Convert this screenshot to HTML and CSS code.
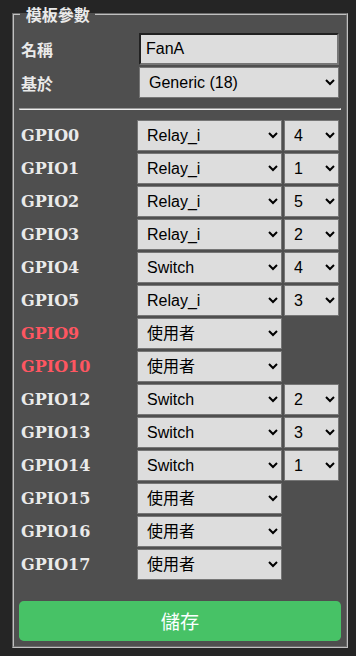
FILE: index.html
```html
<!DOCTYPE html>
<html lang="zh-Hant">
<head>
<meta charset="utf-8">
<title>模板參數</title>
<link rel="stylesheet" href="styles.css">
</head>
<body>
<div class="wrap">
<fieldset class="panel">
<legend class="panel-title"><b>&nbsp;模板參數&nbsp;</b></legend>
<form class="form">
<div class="meta">
<b class="lbl">名稱</b><input class="txt" value="FanA">
<b class="lbl">基於</b><select class="sel"><option>Generic (18)</option></select>
</div>
<hr class="sep">
<div class="gpio">
<b class="gl">GPIO0</b><select class="sel"><option>Relay_i</option></select><select class="sel"><option>4</option></select>
<b class="gl">GPIO1</b><select class="sel"><option>Relay_i</option></select><select class="sel"><option>1</option></select>
<b class="gl">GPIO2</b><select class="sel"><option>Relay_i</option></select><select class="sel"><option>5</option></select>
<b class="gl">GPIO3</b><select class="sel"><option>Relay_i</option></select><select class="sel"><option>2</option></select>
<b class="gl">GPIO4</b><select class="sel"><option>Switch</option></select><select class="sel"><option>4</option></select>
<b class="gl">GPIO5</b><select class="sel"><option>Relay_i</option></select><select class="sel"><option>3</option></select>
<b class="gl warn">GPIO9</b><select class="sel"><option>使用者</option></select>
<b class="gl warn">GPIO10</b><select class="sel"><option>使用者</option></select>
<b class="gl">GPIO12</b><select class="sel"><option>Switch</option></select><select class="sel"><option>2</option></select>
<b class="gl">GPIO13</b><select class="sel"><option>Switch</option></select><select class="sel"><option>3</option></select>
<b class="gl">GPIO14</b><select class="sel"><option>Switch</option></select><select class="sel"><option>1</option></select>
<b class="gl">GPIO15</b><select class="sel"><option>使用者</option></select>
<b class="gl">GPIO16</b><select class="sel"><option>使用者</option></select>
<b class="gl">GPIO17</b><select class="sel"><option>使用者</option></select>
</div>
<button class="save" type="button">儲存</button>
</form>
</fieldset>
</div>
</body>
</html>
```
FILE: styles.css
```css
html, body {
  margin: 0;
  padding: 0;
  background: #252525;
}
body {
  color: #eaeaea;
  font-family: "DejaVu Serif", "Noto Sans CJK TC", serif;
  font-size: 16px;
}
.wrap {
  padding: 2px 8px 0 12px;
}
.panel {
  margin: 0;
  padding: 5px;
  background: #4f4f4f;
  border: 2px groove rgb(192, 192, 192);
}
.panel-title {
  padding: 0 2px;
  margin-left: 1px;
  line-height: 24px;
  font-family: "Noto Sans CJK TC", sans-serif;
  color: #eaeaea;
}
.form {
  margin: 0;
}
.meta {
  display: grid;
  grid-template-columns: 116px 200px;
  gap: 2px;
  padding: 2px;
  align-items: center;
}
.lbl {
  font-family: "Noto Sans CJK TC", sans-serif;
  font-weight: 700;
  line-height: 20px;
}
.txt {
  width: 100%;
  height: 32px;
  box-sizing: border-box;
  margin: 0;
  padding: 5px;
  font: 16px "Liberation Sans", "Noto Sans CJK TC", sans-serif;
  background: #dddddd;
  color: #000;
}
.sel {
  width: 100%;
  height: 31px;
  box-sizing: border-box;
  margin: 0;
  padding: 5px;
  font: 16px "Liberation Sans", "Noto Sans CJK TC", sans-serif;
  background: #dddddd;
  color: #000;
}
.sep {
  margin: 8px 0;
}
.gpio {
  display: grid;
  grid-template-columns: 114px 145px 55px;
  gap: 2px;
  padding: 2px;
  align-items: center;
}
.gl {
  grid-column: 1;
  font-family: "DejaVu Serif", serif;
  font-weight: 700;
  line-height: 20px;
}
.warn {
  color: #ff5661;
}
.save {
  display: block;
  width: 100%;
  height: 40px;
  margin-top: 19px;
  border: 0;
  border-radius: 0.3rem;
  background: #47c266;
  color: #faffff;
  font-family: "Noto Sans CJK TC", sans-serif;
  font-size: 1.2rem;
  cursor: pointer;
}
```
